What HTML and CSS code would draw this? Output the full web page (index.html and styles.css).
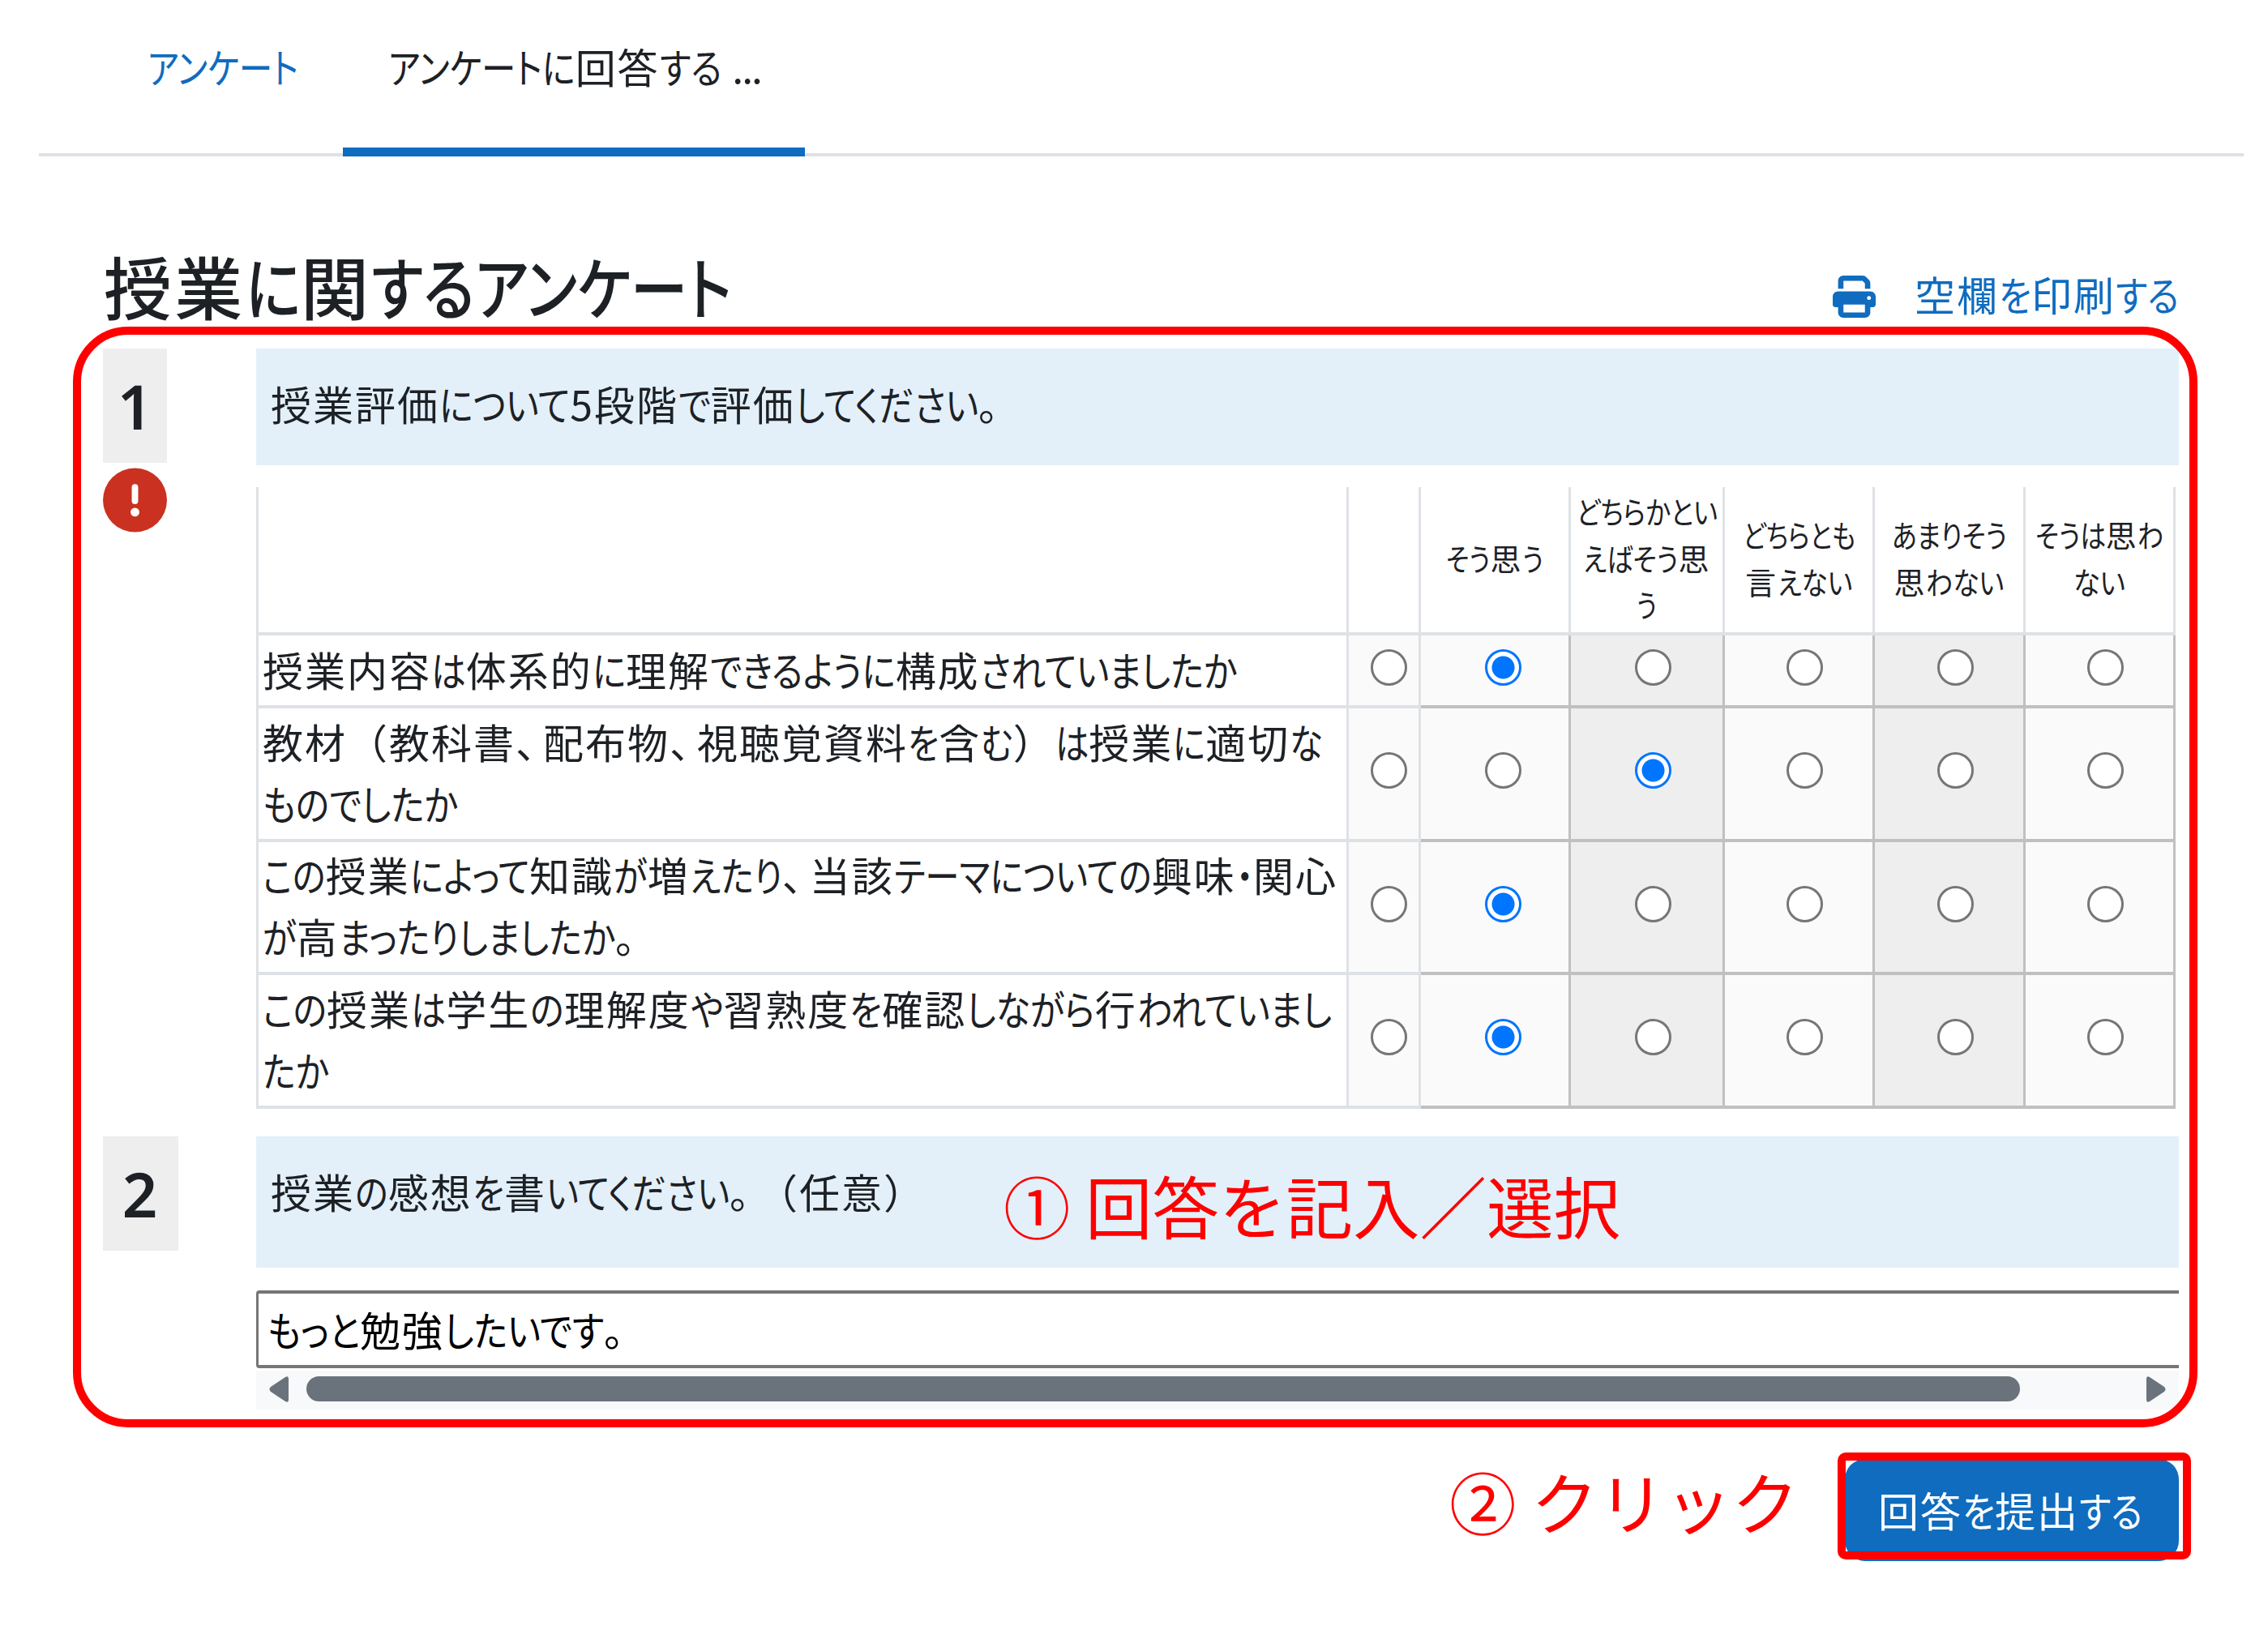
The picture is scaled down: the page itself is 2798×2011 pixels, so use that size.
FILE: index.html
```
<!DOCTYPE html>
<html lang="ja">
<head>
  <meta charset="UTF-8" />
  <title>授業に関するアンケート</title>
  <link rel="stylesheet" href="styles.css">
</head>
<body>
  <nav class="tabs">
    <a class="tab" href="#"><span data-w="186">アンケート</span></a>
    <a class="tab active" href="#"><span data-w="460">アンケートに回答する <span class="dots">...</span></span></a>
  </nav>

  <main class="page">
    <header class="page-header">
      <h1><span data-w="775">授業に関するアンケート</span></h1>
      <a class="print-link" href="#">
        <svg class="print-icon" viewBox="0 0 512 512" preserveAspectRatio="none"><path fill="currentColor" d="M128 0C92.700 0 64 28.700 64 64v96h64V64h226.700L384 93.300V160h64V93.300c0-17-6.700-33.300-18.700-45.300L400 18.700C388 6.700 371.700 0 354.700 0H128zM384 352v96H128v-96h256zm64 32h32c17.700 0 32-14.300 32-32v-96c0-35.300-28.700-64-64-64H64c-35.300 0-64 28.700-64 64v96c0 17.700 14.300 32 32 32h32v64c0 35.300 28.700 64 64 64h256c35.300 0 64-28.700 64-64v-64zM432 248a24 24 0 1 1 0 48 24 24 0 1 1 0-48z"/></svg>
        <span data-w="326">空欄を印刷する</span>
      </a>
    </header>

    <section class="question">
      <div class="q-info">
        <div class="q-num">1</div>
        <svg class="q-required" viewBox="0 0 80 80"><circle cx="40" cy="40" r="40" fill="#ca3120"/><path d="M40 24v17" stroke="#fff" stroke-width="8" stroke-linecap="round"/><circle cx="40" cy="55" r="5.500" fill="#fff"/></svg>
      </div>
      <div class="q-body">
        <div class="q-text"><span data-w="907">授業評価について5段階で評価してください。</span></div>
        <table class="rate">
          <colgroup><col class="c-label"><col class="c-none"><col class="c1"><col class="c2"><col class="c3"><col class="c4"><col class="c5"></colgroup>
          <thead>
            <tr>
              <th></th>
              <th></th>
              <th><span data-w="120">そう思う</span></th>
              <th><span data-w="174">どちらかとい</span><br><span data-w="157">えばそう思</span><br><span data-w="25">う</span></th>
              <th><span data-w="139">どちらとも</span><br><span data-w="132">言えない</span></th>
              <th><span data-w="142">あまりそう</span><br><span data-w="136">思わない</span></th>
              <th><span data-w="159">そうは思わ</span><br><span data-w="64">ない</span></th>
            </tr>
          </thead>
          <tbody>
            <tr class="single">
              <td class="label"><span data-w="1202">授業内容は体系的に理解できるように構成されていましたか</span></td>
              <td class="none"><i class="radio"></i></td>
              <td class="opt first"><i class="radio on"></i></td>
              <td class="opt alt"><i class="radio"></i></td>
              <td class="opt"><i class="radio"></i></td>
              <td class="opt alt"><i class="radio"></i></td>
              <td class="opt"><i class="radio"></i></td>
            </tr>
            <tr>
              <td class="label"><span data-w="1308">教材（教科書、配布物、視聴覚資料を含む）は授業に適切な</span><br><span data-w="241">ものでしたか</span></td>
              <td class="none"><i class="radio"></i></td>
              <td class="opt first"><i class="radio"></i></td>
              <td class="opt alt"><i class="radio on"></i></td>
              <td class="opt"><i class="radio"></i></td>
              <td class="opt alt"><i class="radio"></i></td>
              <td class="opt"><i class="radio"></i></td>
            </tr>
            <tr>
              <td class="label"><span data-w="1326">この授業によって知識が増えたり、当該テーマについての興味・関心</span><br><span data-w="469">が高まったりしましたか。</span></td>
              <td class="none"><i class="radio"></i></td>
              <td class="opt first"><i class="radio on"></i></td>
              <td class="opt alt"><i class="radio"></i></td>
              <td class="opt"><i class="radio"></i></td>
              <td class="opt alt"><i class="radio"></i></td>
              <td class="opt"><i class="radio"></i></td>
            </tr>
            <tr>
              <td class="label"><span data-w="1319">この授業は学生の理解度や習熟度を確認しながら行われていまし</span><br><span data-w="82">たか</span></td>
              <td class="none"><i class="radio"></i></td>
              <td class="opt first"><i class="radio on"></i></td>
              <td class="opt alt"><i class="radio"></i></td>
              <td class="opt"><i class="radio"></i></td>
              <td class="opt alt"><i class="radio"></i></td>
              <td class="opt"><i class="radio"></i></td>
            </tr>
          </tbody>
        </table>
      </div>
    </section>

    <section class="question">
      <div class="q-info">
        <div class="q-num wide">2</div>
      </div>
      <div class="q-body">
        <div class="q-text tall"><span data-w="808">授業の感想を書いてください。（任意）</span></div>
        <div class="answer"><span data-w="449">もっと勉強したいです。</span></div>
        <div class="scrollbar">
          <svg class="arrow" viewBox="0 0 24 32"><path d="M24 3v26q0 4-4 2L2 19q-3-3 0-6L20 1q4-2 4 2z" fill="#6a737b"/></svg>
          <div class="thumb"></div>
          <svg class="arrow" viewBox="0 0 24 32"><path d="M0 3v26q0 4 4 2l18-12q3-3 0-6L4 1Q0-1 0 3z" fill="#6a737b"/></svg>
        </div>
      </div>
    </section>

    <div class="submit-row">
      <button class="submit"><span data-w="326">回答を提出する</span></button>
    </div>
  </main>

  <!-- 操作説明 -->
  <div class="mark mark-form"></div>
  <div class="mark mark-submit"></div>
  <div class="note note-1">① 回答を記入／選択</div>
  <div class="note note-2">② クリック</div>

  <script src="kana.js"></script>
</body>
</html>
```
FILE: kana.js
```
// かなだけを横に詰めて、行全体を data-w の幅に収める
document.querySelectorAll('[data-w]').forEach(line => {
  line.innerHTML = line.innerHTML
    .replace(/[ぁ-んァ-ヶー・]+/g, '<span class="kana">$&</span>')
    .replace(/[、。]/g, '<span class="punct">$&</span>');

  const kana = [...line.querySelectorAll('.kana')];
  const widths = kana.map(span => span.getBoundingClientRect().width);
  const kanaWidth = widths.reduce((a, b) => a + b, 0);
  const rest = line.getBoundingClientRect().width - kanaWidth;
  const scale = (line.dataset.w - rest) / kanaWidth;

  kana.forEach((span, i) => {
    span.style.width = widths[i] * scale + 'px';
    span.style.transform = `scaleX(${scale})`;
  });
});
```
FILE: styles.css
```
* {
  box-sizing: border-box;
}

body {
  margin: 0;
  font-family: "Noto Sans CJK JP", sans-serif;
  font-size: 50px;
  line-height: 75px;
  color: #1d2125;
  background: #fff;
  white-space: nowrap;
}

a {
  color: #0f6cbf;
  text-decoration: none;
}

[data-w] {
  letter-spacing: 0.04em;
}

.kana {
  display: inline-block;
  letter-spacing: 0;
  font-feature-settings: "palt";
  transform-origin: left;
}

.punct {
  display: inline-block;
  width: 0.68em;
}

.dots {
  letter-spacing: -0.04em;
}

/* タブ */
.tabs {
  display: flex;
  height: 193px;
  margin: 0 30px 0 48px;
  padding-left: 79px;
  border-bottom: 4px solid #dee2e6;
}

.tab {
  width: 296px;
  height: 193px;
  padding: 44px 0 0 55px;
  border-bottom: 11px solid transparent;
}

.tab.active {
  width: 570px;
  padding-left: 56px;
  color: #1d2125;
  border-bottom-color: #0f6cbf;
}

.page {
  padding: 0 110px 0 127px;
}

.page-header {
  display: flex;
  justify-content: space-between;
  height: 237px;
}

h1 {
  margin: 0;
  padding: 96px 0 0 1px;
  font-size: 84px;
  font-weight: 500;
  line-height: 126px;
}

.print-link {
  display: flex;
  padding-top: 132px;
}

.print-icon {
  width: 53px;
  height: 52px;
  margin: 15px 48px 0 0;
}

/* 設問 */
.question {
  display: flex;
}

.q-info {
  width: 189px;
}

.q-num {
  width: 79px;
  height: 141px;
  margin-bottom: 6px;
  background: #eee;
  font-family: "Noto Sans", sans-serif;
  font-size: 76px;
  font-weight: 600;
  line-height: 142px;
  text-align: center;
}

.q-num.wide {
  width: 93px;
  padding-right: 2px;
}

.q-required {
  display: block;
  width: 79px;
  height: 80px;
}

.q-body {
  width: 2372px;
}

.q-text {
  height: 144px;
  padding: 30px 0 0 18px;
  background: #e3f0fa;
}

.q-text.tall {
  height: 162px;
}

/* 5段階評価の表 */
.rate {
  width: 2367px;
  margin: 27px 0 34px;
  border-collapse: collapse;
  table-layout: fixed;
}

.c-label { width: 1345px; }
.c-none { width: 89px; }
.c1 { width: 185px; }
.c2 { width: 190px; }
.c3 { width: 185px; }
.c4 { width: 186px; }
.c5 { width: 185px; }

.rate th,
.rate td {
  padding: 0;
  border: 3px solid #dee2e6;
  border-width: 4px 3px;
}

.rate th {
  height: 181px;
  padding-bottom: 6px;
  border-top: 0;
  font-size: 38px;
  font-weight: 400;
  line-height: 57.500px;
}

.rate td {
  height: 164.5px;
  padding-left: 15px;
  background: #fafafa;
  text-align: center;
}

.rate .single td {
  height: 90px;
}

.rate .label {
  padding: 0 0 5px 5px;
  background: #fff;
  line-height: 76px;
  text-align: left;
}

.rate .none {
  padding-left: 13px;
}

.rate .opt {
  border-color: #c0c0c0;
}

.rate .first {
  padding-left: 20px;
}

.rate .alt {
  background: #eee;
}

.radio {
  display: block;
  width: 45px;
  height: 45px;
  margin: -7px auto 0;
  border: 3px solid #767676;
  border-radius: 50%;
  background: #fff;
}

.radio.on {
  border-color: #0075ff;
  background: radial-gradient(circle, #0075ff 13.500px, #fff 14.500px);
}

/* 記述欄 */
.answer {
  height: 96px;
  margin-top: 28px;
  padding: 6px 0 0 11px;
  border: 4px solid #767676;
  border-width: 4px 0 4px 3px;
  border-radius: 4px 0 0 4px;
  color: #000;
}

.scrollbar {
  display: flex;
  align-items: flex-start;
  height: 48px;
  margin-top: 3px;
  padding: 7px 16px 0;
  background: #f8f9fb;
}

.arrow {
  width: 24px;
  height: 32px;
}

.thumb {
  width: 2114px;
  height: 31px;
  margin: 0 156px 0 22px;
  border-radius: 16px;
  background: #6a737b;
}

.submit-row {
  display: flex;
  justify-content: flex-end;
  padding-top: 61px;
}

.submit {
  width: 412px;
  height: 126px;
  padding: 0 4px 0 0;
  border: 0;
  border-radius: 25px;
  background: #0f6cbf;
  color: #fff;
  font: inherit;
}

/* 赤枠と注釈 */
.mark {
  position: absolute;
  border: 10px solid #f00;
}

.mark-form {
  left: 90px;
  top: 403px;
  width: 2621px;
  height: 1358px;
  border-radius: 68px;
}

.mark-submit {
  left: 2267px;
  top: 1792px;
  width: 436px;
  height: 132px;
  border-radius: 10px;
}

.note {
  position: absolute;
  color: #f00;
  font-size: 82.500px;
  line-height: 120px;
}

.note-1 {
  left: 1238px;
  top: 1426px;
}

.note-2 {
  left: 1788px;
  top: 1791px;
}
```
